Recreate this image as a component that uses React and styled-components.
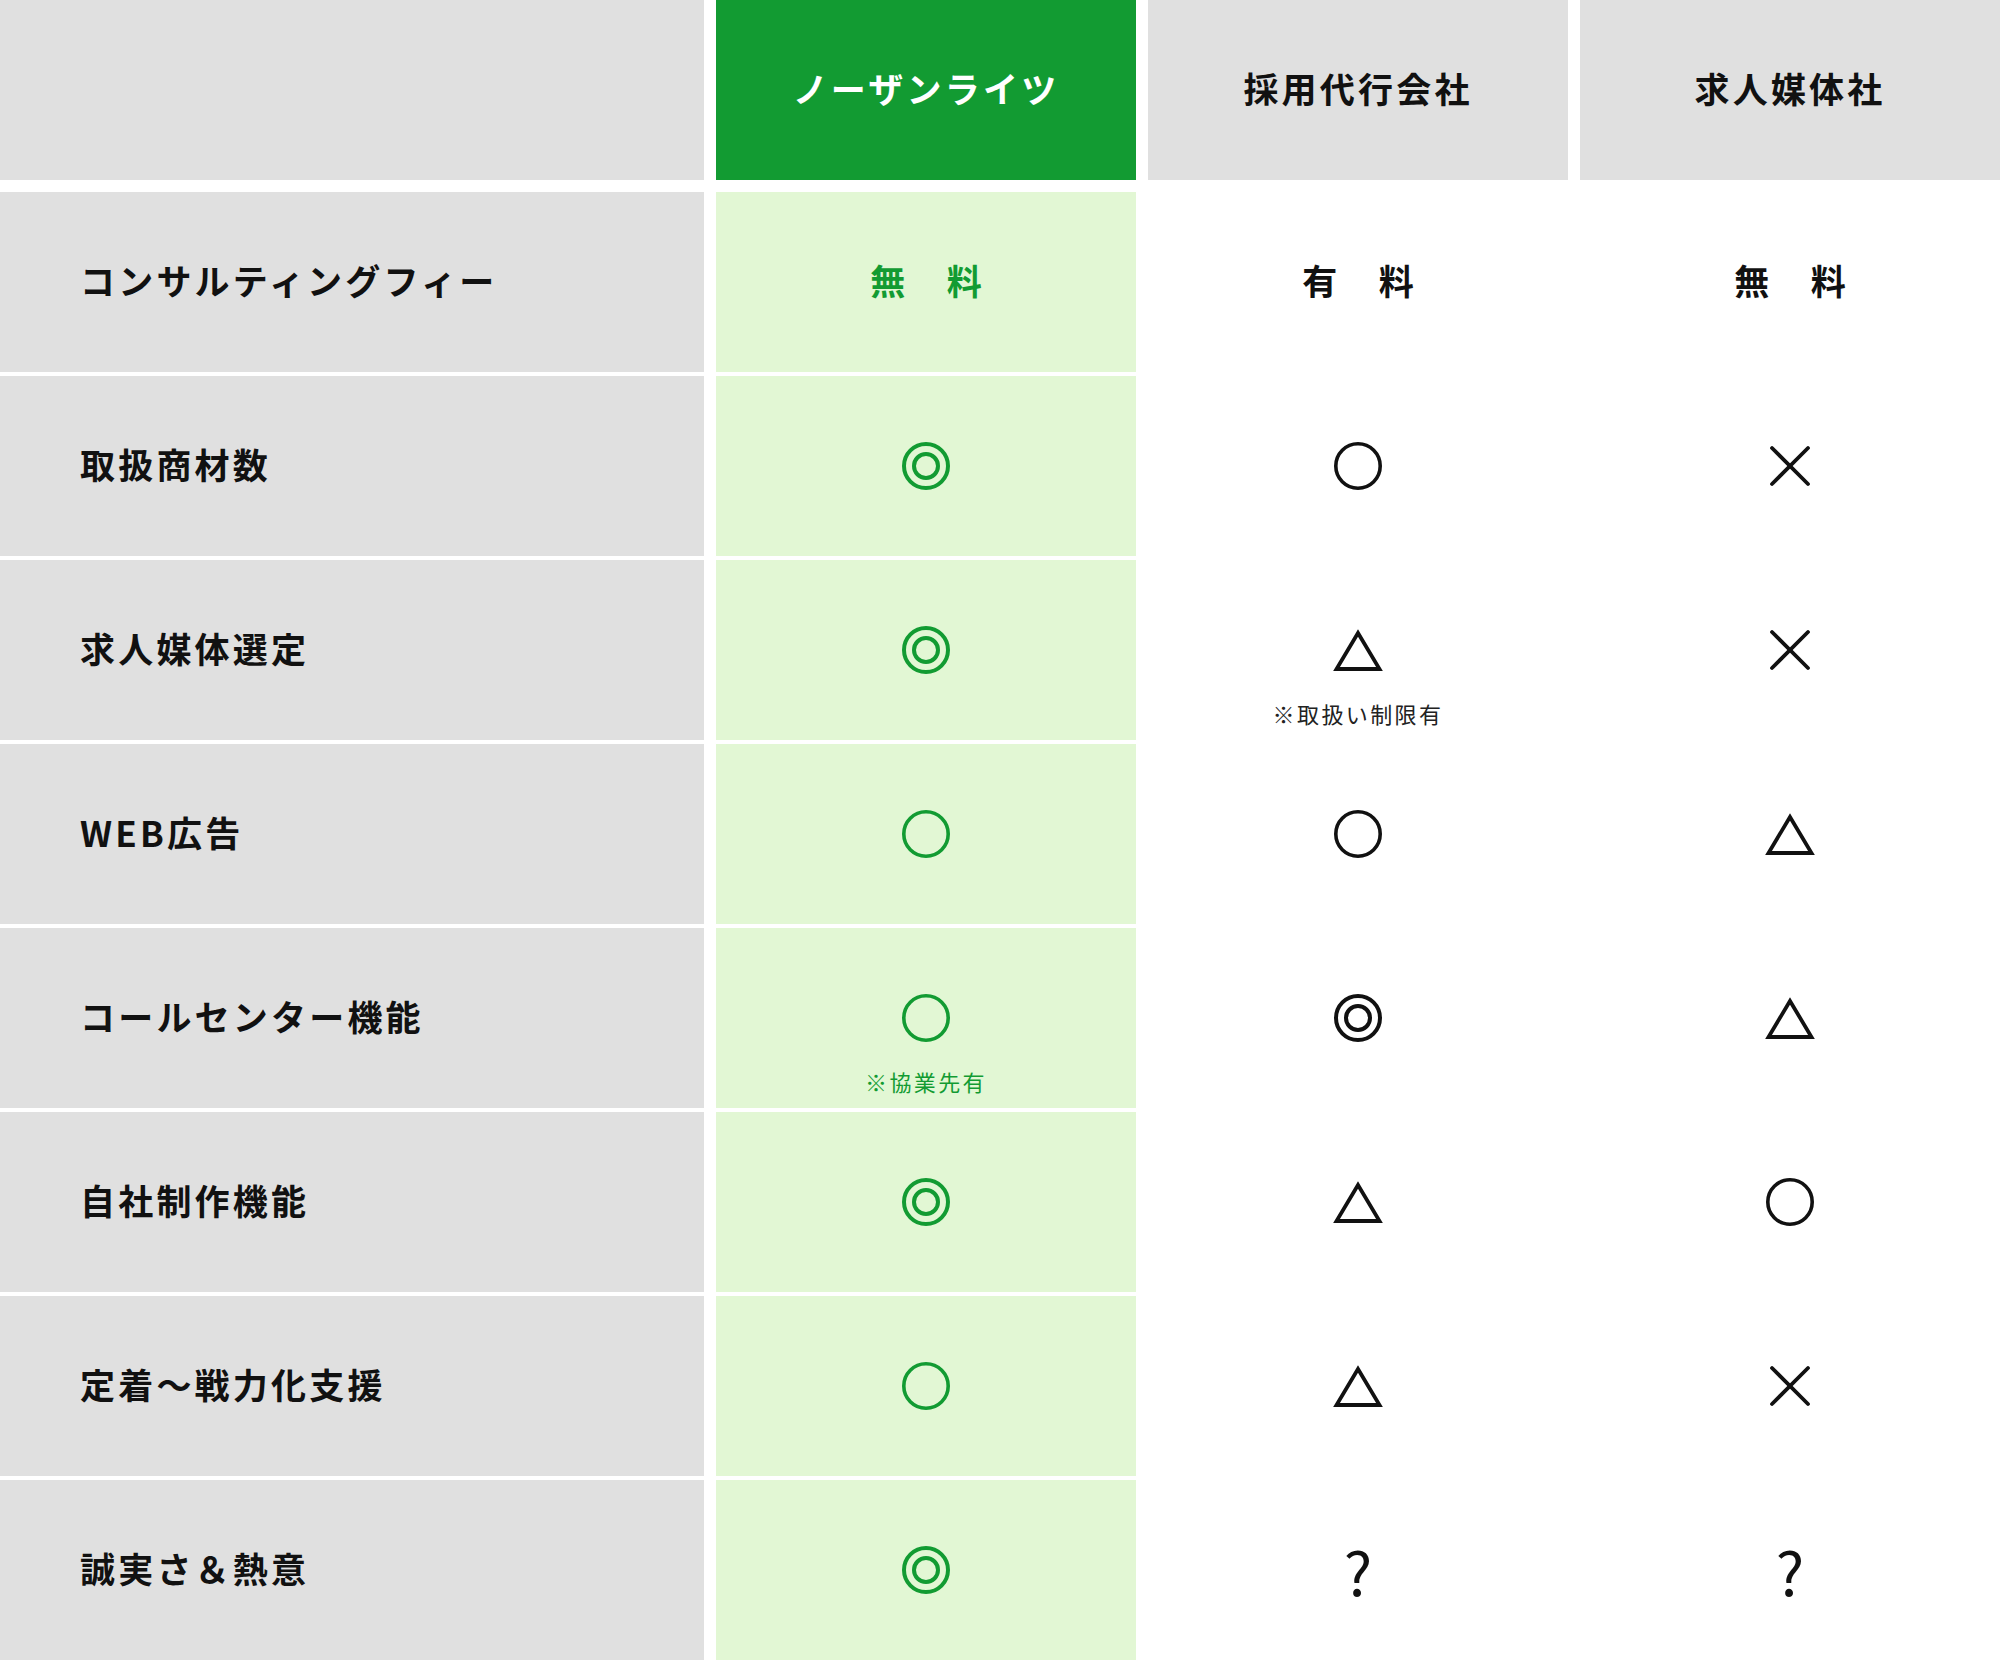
import React from "react";
import styled, { createGlobalStyle } from "styled-components";

const GREEN = "#129b32";
const LIGHT_GREEN = "#e2f7d4";
const GRAY = "#e0e0e0";

const GlobalStyle = createGlobalStyle`
  body {
    margin: 0;
    background: #ffffff;
    font-family: "Noto Sans CJK JP", "Noto Sans", sans-serif;
    color: #111111;
  }
`;

const Table = styled.div`
  width: 2000px;
  display: flex;
  flex-direction: column;
  gap: 4px;
`;

const Row = styled.div`
  display: grid;
  grid-template-columns: 704px 420px 420px 420px;
  column-gap: 12px;
  height: 180px;
`;

const HeaderRow = styled(Row)`
  margin-bottom: 8px;
`;

const HeadCell = styled.div`
  display: flex;
  align-items: center;
  justify-content: center;
  padding-bottom: 5px;
  background: ${p => (p.featured ? GREEN : GRAY)};
  color: ${p => (p.featured ? "#ffffff" : "#111111")};
  font-size: 35px;
  font-weight: 700;
  letter-spacing: 3.2px;
  line-height: 1;
`;

const LabelCell = styled.div`
  display: flex;
  align-items: center;
  padding-left: 80px;
  padding-bottom: 5px;
  background: ${GRAY};
  font-size: 35px;
  font-weight: 700;
  letter-spacing: 3.2px;
  line-height: 1;
  color: #111111;
`;

const ValueCell = styled.div`
  display: grid;
  grid-template-rows: 1fr auto 1fr;
  justify-items: center;
  background: ${p => (p.featured ? LIGHT_GREEN : "#ffffff")};
  color: ${p => (p.featured ? GREEN : "#111111")};
`;

const Mark = styled.div`
  grid-row: 2;
  display: flex;
  align-items: center;
  justify-content: center;
  height: 52px;
`;

const Price = styled.span`
  font-size: 35px;
  font-weight: 700;
  letter-spacing: 3.2px;
  line-height: 1;
  margin-right: -3.2px;
  margin-bottom: 5px;
`;

const Question = styled.span`
  font-size: 60px;
  font-weight: 400;
  line-height: 1;
`;

const Note = styled.div`
  grid-row: 3;
  align-self: start;
  margin-top: 26px;
  font-size: 22px;
  font-weight: 400;
  letter-spacing: 2.4px;
  line-height: 1;
  color: ${p => (p.featured ? GREEN : "#222222")};
`;

const DoubleCircle = () => (
  <svg width="52" height="52" viewBox="0 0 52 52" fill="none" stroke="currentColor" strokeWidth="4">
    <circle cx="26" cy="26" r="22" />
    <circle cx="26" cy="26" r="12" />
  </svg>
);

const Circle = () => (
  <svg width="52" height="52" viewBox="0 0 52 52" fill="none" stroke="currentColor" strokeWidth="3.6">
    <circle cx="26" cy="26" r="22.2" />
  </svg>
);

const Triangle = () => (
  <svg width="54" height="48" viewBox="0 0 54 48" fill="none" stroke="currentColor" strokeWidth="3.8">
    <polygon points="27,7 48.5,43 5.5,43" strokeLinejoin="miter" />
  </svg>
);

const Cross = () => (
  <svg width="42" height="42" viewBox="0 0 42 42" fill="none" stroke="currentColor" strokeWidth="3.8" strokeLinecap="round">
    <line x1="3" y1="3" x2="39" y2="39" />
    <line x1="39" y1="3" x2="3" y2="39" />
  </svg>
);

const renderMark = v => {
  switch (v) {
    case "double":
      return <DoubleCircle />;
    case "circle":
      return <Circle />;
    case "triangle":
      return <Triangle />;
    case "cross":
      return <Cross />;
    case "?":
      return <Question>?</Question>;
    default:
      return <Price>{v}</Price>;
  }
};

const columns = [
  { name: "ノーザンライツ", featured: true },
  { name: "採用代行会社" },
  { name: "求人媒体社" }
];

const rows = [
  { label: "コンサルティングフィー", values: ["無　料", "有　料", "無　料"] },
  { label: "取扱商材数", values: ["double", "circle", "cross"] },
  {
    label: "求人媒体選定",
    values: ["double", "triangle", "cross"],
    notes: [null, "※取扱い制限有", null]
  },
  { label: "WEB広告", values: ["circle", "circle", "triangle"] },
  {
    label: "コールセンター機能",
    values: ["circle", "double", "triangle"],
    notes: ["※協業先有", null, null]
  },
  { label: "自社制作機能", values: ["double", "triangle", "circle"] },
  { label: "定着〜戦力化支援", values: ["circle", "triangle", "cross"] },
  { label: "誠実さ＆熱意", values: ["double", "?", "?"] }
];

const App = () => (
  <>
    <GlobalStyle />
    <Table>
      <HeaderRow>
        <HeadCell />
        {columns.map(col => (
          <HeadCell key={col.name} featured={col.featured}>
            {col.name}
          </HeadCell>
        ))}
      </HeaderRow>
      {rows.map(row => (
        <Row key={row.label}>
          <LabelCell>{row.label}</LabelCell>
          {row.values.map((v, i) => (
            <ValueCell key={i} featured={columns[i].featured}>
              <Mark>{renderMark(v)}</Mark>
              {row.notes && row.notes[i] && (
                <Note featured={columns[i].featured}>{row.notes[i]}</Note>
              )}
            </ValueCell>
          ))}
        </Row>
      ))}
    </Table>
  </>
);

export default App;
